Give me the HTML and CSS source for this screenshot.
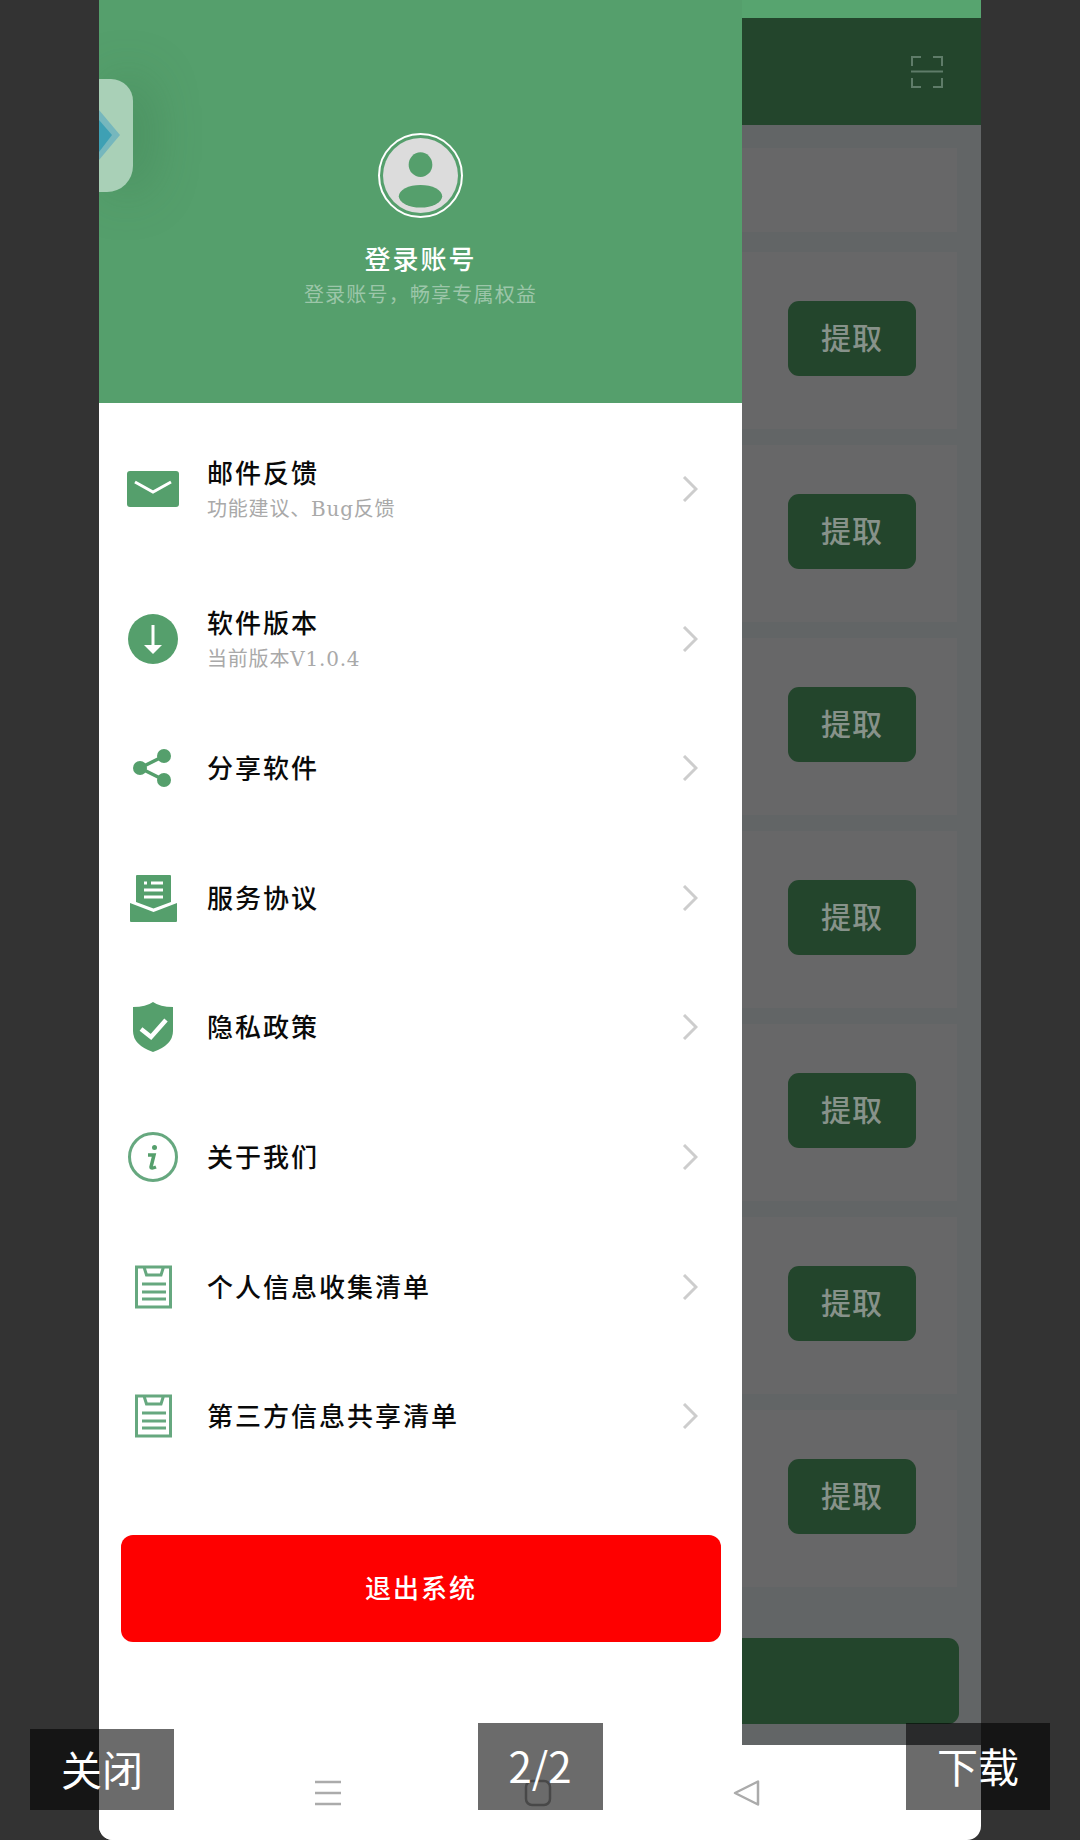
FILE: index.html
```html
<!DOCTYPE html>
<html lang="zh-CN">
<head>
<meta charset="utf-8">
<title>登录账号</title>
<link rel="stylesheet" href="styles.css">
</head>
<body>
<div class="viewer">
  <div class="phone">
    <aside class="drawer">
      <header class="profile">
        <div class="float-app">
          <svg class="float-gem" viewBox="0 0 22 50"><path class="gem-a" d="M0 0L21 25L0 50Z"/><path class="gem-b" d="M0 10L13 25L0 42Z"/></svg>
        </div>
        <div class="avatar-ring">
          <svg class="avatar" viewBox="0 0 76 76"><circle class="av-bg" cx="38" cy="38" r="38"/><ellipse class="av-fg" cx="38" cy="27" rx="12" ry="12.5"/><ellipse class="av-fg" cx="38" cy="59" rx="22" ry="11.5"/></svg>
        </div>
        <h1 class="profile-name">登录账号</h1>
        <p class="profile-hint">登录账号，畅享专属权益</p>
      </header>
      <ul class="menu">
        <li class="item item-tall">
          <svg class="ico" viewBox="0 0 52 52"><rect class="f" x="0" y="8" width="52" height="36" rx="3"/><path class="w" d="M8 19L26 29L44 19"/></svg>
          <div class="item-text"><span class="item-title">邮件反馈</span><span class="item-sub">功能建议、Bug反馈</span></div>
          <svg class="chev" viewBox="0 0 16 26"><path d="M2 1L14 13L2 25"/></svg>
        </li>
        <li class="item item-tall">
          <svg class="ico" viewBox="0 0 52 52"><circle class="f" cx="26" cy="26" r="25"/><path class="w" d="M26 12V34"/><path class="wf" d="M17 32H35L26 41Z"/></svg>
          <div class="item-text"><span class="item-title">软件版本</span><span class="item-sub">当前版本V1.0.4</span></div>
          <svg class="chev" viewBox="0 0 16 26"><path d="M2 1L14 13L2 25"/></svg>
        </li>
        <li class="item">
          <svg class="ico" viewBox="0 0 52 52"><path class="g4" d="M37 14L13 26L37 38"/><circle class="f" cx="37" cy="14" r="7"/><circle class="f" cx="13" cy="26" r="7"/><circle class="f" cx="37" cy="38" r="7"/></svg>
          <div class="item-text"><span class="item-title">分享软件</span></div>
          <svg class="chev" viewBox="0 0 16 26"><path d="M2 1L14 13L2 25"/></svg>
        </li>
        <li class="item">
          <svg class="ico" viewBox="0 0 52 52"><path class="f" d="M9 4Q9 3 10 3H43Q44 3 44 4V30L26.500 36.500L9 30Z"/><path class="f" d="M3 31L26.500 40L50 31V49Q50 50 49 50H4Q3 50 3 49Z"/><path class="w" d="M17 11H20M24 11H36M17 18H36M17 25H36"/></svg>
          <div class="item-text"><span class="item-title">服务协议</span></div>
          <svg class="chev" viewBox="0 0 16 26"><path d="M2 1L14 13L2 25"/></svg>
        </li>
        <li class="item">
          <svg class="ico" viewBox="0 0 52 52"><path class="f" d="M26 1Q33 6 46 6V30Q46 44 26 51Q6 44 6 30V6Q19 6 26 1Z"/><path class="w4" d="M14 28L24 36L39 19"/></svg>
          <div class="item-text"><span class="item-title">隐私政策</span></div>
          <svg class="chev" viewBox="0 0 16 26"><path d="M2 1L14 13L2 25"/></svg>
        </li>
        <li class="item">
          <svg class="ico" viewBox="0 0 52 52"><circle class="o3" cx="26" cy="26" r="23.500"/><circle class="f" cx="27.500" cy="16.500" r="2.500"/><path class="g4" d="M21 24H27L24 36Q24 38 29 36"/></svg>
          <div class="item-text"><span class="item-title">关于我们</span></div>
          <svg class="chev" viewBox="0 0 16 26"><path d="M2 1L14 13L2 25"/></svg>
        </li>
        <li class="item">
          <svg class="ico" viewBox="0 0 52 52"><path class="o3" d="M9.500 6H43.500V46H9.500ZM17 6L19.500 14H34L36.500 6M15 23H39M15 31H39M15 38H39"/></svg>
          <div class="item-text"><span class="item-title">个人信息收集清单</span></div>
          <svg class="chev" viewBox="0 0 16 26"><path d="M2 1L14 13L2 25"/></svg>
        </li>
        <li class="item">
          <svg class="ico" viewBox="0 0 52 52"><path class="o3" d="M9.500 6H43.500V46H9.500ZM17 6L19.500 14H34L36.500 6M15 23H39M15 31H39M15 38H39"/></svg>
          <div class="item-text"><span class="item-title">第三方信息共享清单</span></div>
          <svg class="chev" viewBox="0 0 16 26"><path d="M2 1L14 13L2 25"/></svg>
        </li>
      </ul>
      <button class="logout">退出系统</button>
    </aside>

    <section class="page">
      <div class="page-status"></div>
      <div class="page-bar">
        <svg class="scan" viewBox="0 0 32 32"><path d="M10 1H1V10M22 1H31V10M0 15.500H32M1 22V31H10M31 22V31H22"/></svg>
      </div>
      <div class="page-body">
        <div class="card card-top"></div>
        <div class="card"><span class="pick">提取</span></div>
        <div class="card"><span class="pick">提取</span></div>
        <div class="card"><span class="pick">提取</span></div>
        <div class="card"><span class="pick">提取</span></div>
        <div class="card"><span class="pick">提取</span></div>
        <div class="card"><span class="pick">提取</span></div>
        <div class="card"><span class="pick">提取</span></div>
        <div class="page-cta"></div>
      </div>
    </section>

    <nav class="sysnav">
      <svg class="nav-ico" viewBox="0 0 28 26"><path d="M1 2H27M1 13H27M1 24H27"/></svg>
      <svg class="nav-ico" viewBox="0 0 28 26"><rect x="2" y="1" width="24" height="24" rx="6"/></svg>
      <svg class="nav-ico" viewBox="0 0 28 26"><path d="M25 1.500V24.500L2 13Z"/></svg>
    </nav>
  </div>

  <div class="viewer-actions">
    <button class="act act-close">关闭</button>
    <button class="act act-count">2/2</button>
    <button class="act act-save">下载</button>
  </div>
</div>
</body>
</html>
```

FILE: styles.css
```css
* { box-sizing: border-box; }
html, body { margin: 0; padding: 0; }
body {
  width: 1080px;
  height: 1840px;
  overflow: hidden;
  background: #333333;
  font-family: "Noto Sans CJK SC", "Noto Sans", sans-serif;
}
.viewer { position: relative; width: 1080px; height: 1840px; }

.phone {
  position: relative;
  display: flex;
  width: 882px;
  height: 1840px;
  margin: 0 auto;
  background: #fff;
  border-radius: 0 0 14px 14px;
  overflow: hidden;
}

/* Drawer */
.drawer {
  width: 643px;
  flex: none;
  display: flex;
  flex-direction: column;
  background: #fff;
}
.profile {
  position: relative;
  height: 403px;
  flex: none;
  padding-top: 133px;
  display: flex;
  flex-direction: column;
  align-items: center;
  background: #559f6c;
}
.float-app {
  position: absolute;
  left: 0;
  top: 79px;
  width: 34px;
  height: 113px;
  display: flex;
  align-items: center;
  background: #a9d0b7;
  border-radius: 0 22px 26px 0;
  box-shadow: 14px 0 50px rgba(50, 110, 70, .35);
}
.float-gem { width: 22px; height: 50px; margin-top: -2px; }
.gem-a { fill: #76b7bd; }
.gem-b { fill: #3ea0b4; }
.avatar-ring {
  width: 85px;
  height: 85px;
  padding: 3px;
  border: 2px solid #fff;
  border-radius: 50%;
}
.avatar { display: block; width: 100%; height: 100%; }
.av-bg { fill: #dcdcdc; }
.av-fg { fill: #559f6c; }
.profile-name {
  margin: 23px 0 0;
  font-size: 26px;
  line-height: 34px;
  font-weight: 500;
  letter-spacing: 2px;
  color: #fff;
}
.profile-hint {
  margin: 5px 0 0;
  font-size: 20px;
  line-height: 28px;
  letter-spacing: 1.200px;
  color: #9cc6a9;
}

.menu {
  list-style: none;
  margin: 0;
  padding: 22px 45px 0 28px;
  flex: none;
}
.item {
  display: flex;
  align-items: center;
  height: 129.700px;
}
.item-tall { height: 128px; margin-bottom: 22px; }
.item-tall + .item-tall { margin-bottom: 0; }
.ico { width: 52px; height: 52px; flex: none; overflow: visible; }
.f { fill: #559f6c; }
.wf { fill: #fff; }
.w { fill: none; stroke: #fff; stroke-width: 3; }
.w4 { fill: none; stroke: #fff; stroke-width: 4.500; }
.g4 { fill: none; stroke: #559f6c; stroke-width: 3.500; }
.o3 { fill: none; stroke: #66a87f; stroke-width: 3; }
.item-text {
  flex: 1;
  margin-left: 28px;
  display: flex;
  flex-direction: column;
}
.item-title {
  font-size: 26px;
  line-height: 34px;
  font-weight: 500;
  letter-spacing: 2px;
  color: #0a0a0a;
}
.item-title:only-child { margin-top: -2px; }
.item-sub {
  margin-top: 6px;
  font-family: "DejaVu Serif", "Noto Sans CJK SC", serif;
  font-size: 20px;
  line-height: 28px;
  letter-spacing: .8px;
  color: #a9a9a9;
}
.chev { width: 16px; height: 26px; flex: none; margin-right: -1px; }
.chev path { fill: none; stroke: #cdcdcd; stroke-width: 3; }

.logout {
  display: block;
  width: 600px;
  height: 107px;
  margin: 54px 0 0 22px;
  padding: 0 0 5px;
  border: 0;
  border-radius: 12px;
  background: #fe0000;
  color: #fff;
  font-family: inherit;
  font-size: 26px;
  font-weight: 500;
  letter-spacing: 2px;
}

/* Dimmed page behind the drawer */
.page {
  flex: 1;
  display: flex;
  flex-direction: column;
  height: 1745px;
}
.page-status { height: 18px; flex: none; background: #57a46f; }
.page-bar {
  height: 107px;
  flex: none;
  display: flex;
  align-items: center;
  justify-content: flex-end;
  padding: 0 38px 0 0;
  background: #23452c;
}
.scan { width: 32px; height: 32px; }
.scan path { fill: none; stroke: #5f7c69; stroke-width: 2; }
.page-body {
  flex: 1;
  padding-top: 23px;
  background: #626566;
  display: flex;
  flex-direction: column;
  align-items: stretch;
}
.card {
  height: 177px;
  flex: none;
  margin: 0 24px 16px 0;
  padding: 49px 41px 0 0;
  display: flex;
  justify-content: flex-end;
  align-items: flex-start;
  background: #676768;
}
.card-top { height: 84px; margin-bottom: 20px; padding: 0; }
.pick {
  width: 128px;
  height: 75px;
  padding-bottom: 5px;
  display: flex;
  align-items: center;
  justify-content: center;
  border-radius: 11px;
  background: #23452c;
  color: #87928a;
  font-size: 30px;
  font-weight: 500;
  letter-spacing: 1px;
}
.page-cta {
  height: 86px;
  flex: none;
  margin: 35px 22px 0 0;
  border-radius: 0 11px 11px 0;
  background: #23452c;
}

/* System navigation */
.sysnav { position: absolute; inset: auto 0 0 0; height: 0; }
.nav-ico {
  position: absolute;
  top: -60px;
  width: 28px;
  height: 26px;
  overflow: visible;
}
.nav-ico:nth-child(1) { left: 215px; }
.nav-ico:nth-child(2) { left: 425px; }
.nav-ico:nth-child(3) { left: 634px; }
.nav-ico path, .nav-ico rect {
  fill: none;
  stroke: #ababab;
  stroke-width: 2.500;
  stroke-linejoin: round;
}

/* Viewer overlay buttons */
.viewer-actions {
  position: absolute;
  left: 30px;
  right: 30px;
  bottom: 30px;
  display: flex;
  justify-content: space-between;
  align-items: flex-end;
}
.act {
  border: 0;
  padding: 0 0 4px;
  background: rgba(0, 0, 0, .58);
  color: #fff;
  font-family: inherit;
  font-size: 41px;
  font-weight: 400;
}
.act-close { width: 144px; height: 81px; }
.act-count { width: 125px; height: 87px; font-size: 42px; }
.act-save { width: 144px; height: 87px; }
```
